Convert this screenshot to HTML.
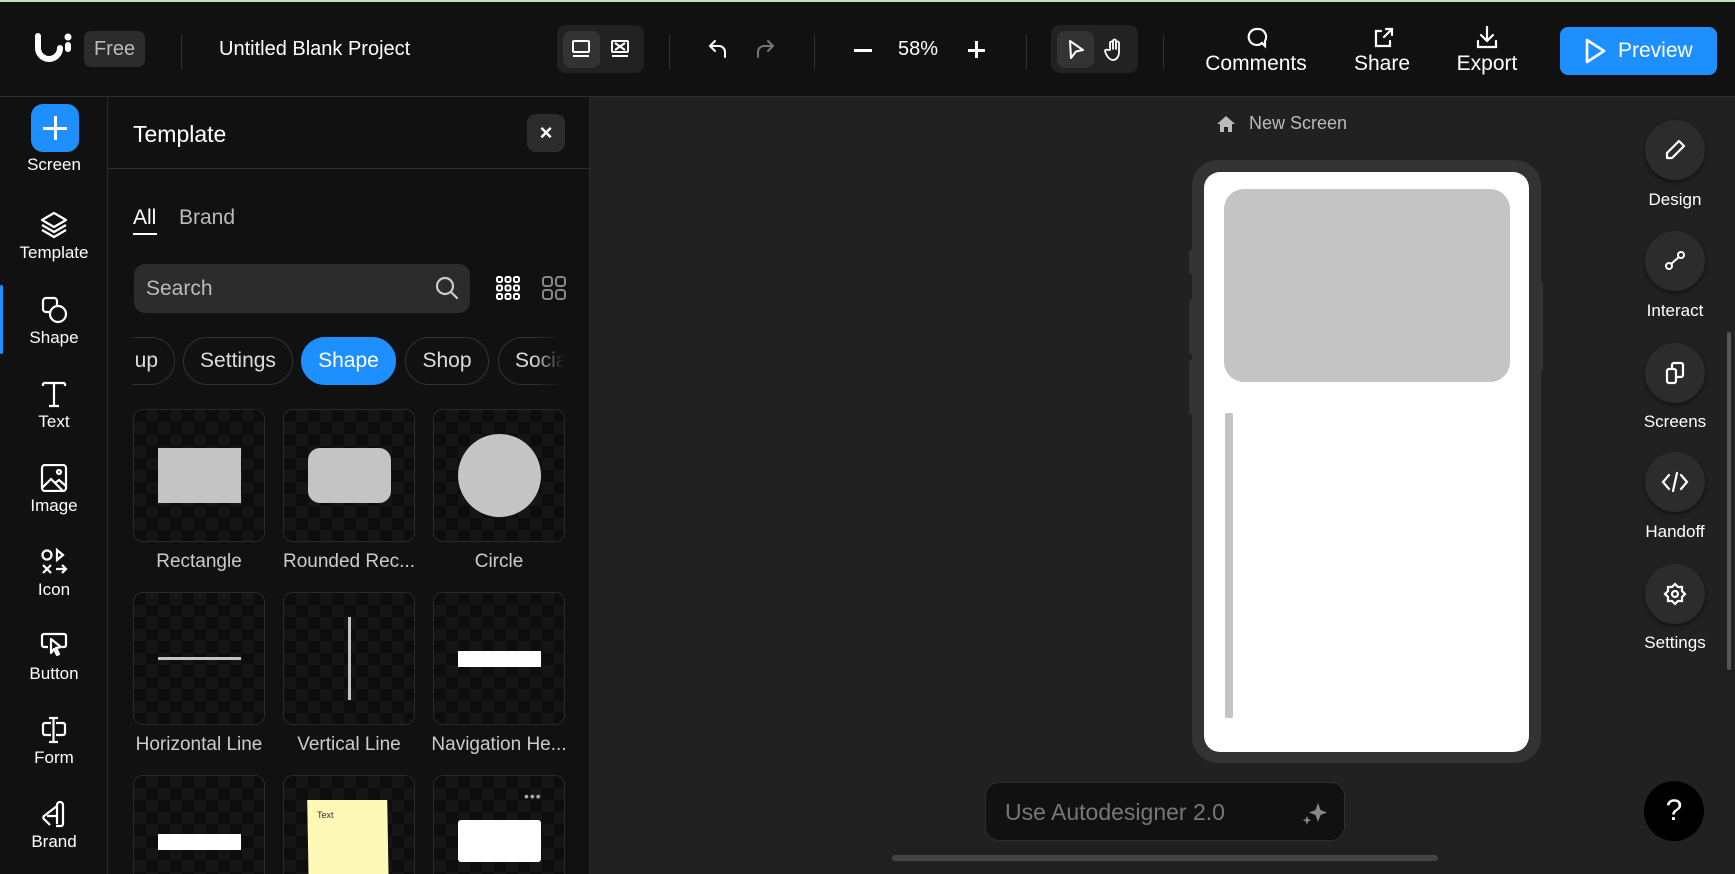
<!DOCTYPE html>
<html><head><meta charset="utf-8"><style>
*{box-sizing:border-box;margin:0;padding:0}
html{background:#111}
body{width:1735px;height:874px;overflow:hidden;background:#212121;font-family:"Liberation Sans",sans-serif;color:#fff;position:relative}
.abs{position:absolute}
.top{left:0;top:0;width:1735px;height:97px;background:#111;border-bottom:1px solid #2e2e2e;border-top:2px solid #bfe3c0}
.vd{position:absolute;top:33px;width:1px;height:34px;background:#333}
.rail{left:0;top:97px;width:108px;height:777px;background:#111;border-right:1px solid #2a2a2a}
.ri{position:absolute;left:0;width:108px;text-align:center;font-size:17px}
.ri svg{display:block;margin:0 auto 4px}
.panel{left:108px;top:97px;width:482px;height:777px;background:#111;border-right:1px solid #2a2a2a;overflow:hidden}
.chip{position:absolute;top:337px;height:48px;border:1px solid #333;border-radius:24px;font-size:21px;line-height:46px;text-align:center;color:#ddd}
.card{position:absolute;width:132px;height:133px;border:1px solid #2a2a2a;border-radius:10px;background-color:#0d0d0d;background-image:linear-gradient(45deg,#151515 25%,transparent 25%,transparent 75%,#151515 75%),linear-gradient(45deg,#151515 25%,transparent 25%,transparent 75%,#151515 75%);background-size:24px 24px;background-position:0 0,12px 12px;overflow:hidden}
.lbl{position:absolute;width:150px;text-align:center;font-size:19px;color:#ccc}
.rb{position:absolute;left:1645px;width:60px;height:60px;border-radius:50%;background:#2c2c2c;box-shadow:0 2px 4px rgba(0,0,0,.5);display:flex;align-items:center;justify-content:center}
.rl{position:absolute;left:1615px;width:120px;text-align:center;font-size:17px}
.tb{position:absolute;text-align:center;font-size:21px;width:120px}
</style></head><body>
<div class="abs top">
  <svg class="abs" style="left:34px;top:30px" width="40" height="34" viewBox="0 0 40 34"><path d="M4 4v12a11 11 0 0 0 22 0" fill="none" stroke="#fff" stroke-width="6" stroke-linecap="round"/><circle cx="34" cy="5" r="3.5" fill="#fff"/><path d="M34 13v4" stroke="#fff" stroke-width="6" stroke-linecap="round"/></svg>
  <div class="abs" style="left:84px;top:29px;width:61px;height:36px;background:#2c2c2c;border-radius:7px;font-size:20px;color:#bbb;line-height:36px;text-align:center">Free</div>
  <div class="vd" style="left:181px"></div>
  <div class="abs" style="left:219px;top:36px;font-size:20px">Untitled Blank Project</div>
  <div class="abs" style="left:557px;top:23px;width:87px;height:48px;background:#222;border-radius:9px"></div>
  <div class="abs" style="left:563px;top:29px;width:37px;height:37px;background:#333;border-radius:8px"></div>
  <svg class="abs" style="left:571px;top:37px" width="20" height="20" viewBox="0 0 20 20" fill="none" stroke="#fff" stroke-width="2"><rect x="2" y="2" width="16" height="11" rx="1"/><path d="M2 17h16"/></svg>
  <svg class="abs" style="left:610px;top:37px" width="20" height="20" viewBox="0 0 20 20" fill="none" stroke="#fff" stroke-width="2"><rect x="2" y="2" width="16" height="11" rx="1"/><path d="M5 4l10 7M15 4L5 11M2 17h16"/></svg>
  <div class="vd" style="left:669px"></div>
  <svg class="abs" style="left:707px;top:36px" width="22" height="22" viewBox="0 0 22 22" fill="none" stroke="#fff" stroke-width="2" stroke-linecap="round"><path d="M8 3L3 8l5 5M3 8h9a6 6 0 0 1 6 6v5"/></svg>
  <svg class="abs" style="left:754px;top:36px" width="22" height="22" viewBox="0 0 22 22" fill="none" stroke="#777" stroke-width="2" stroke-linecap="round"><path d="M14 3l5 5-5 5M19 8h-9a6 6 0 0 0-6 6v5"/></svg>
  <div class="vd" style="left:814px"></div>
  <div class="abs" style="left:854px;top:47px;width:18px;height:2.5px;background:#fff"></div>
  <div class="abs" style="left:898px;top:36px;font-size:20px">58%</div>
  <div class="abs" style="left:968px;top:47px;width:17px;height:2.5px;background:#fff"></div>
  <div class="abs" style="left:975px;top:39px;width:2.5px;height:17px;background:#fff"></div>
  <div class="vd" style="left:1026px"></div>
  <div class="abs" style="left:1051px;top:23px;width:87px;height:48px;background:#222;border-radius:9px"></div>
  <div class="abs" style="left:1057px;top:29px;width:37px;height:37px;background:#333;border-radius:8px"></div>
  <svg class="abs" style="left:1066px;top:37px" width="20" height="22" viewBox="0 0 20 22" fill="none" stroke="#fff" stroke-width="2" stroke-linejoin="round"><path d="M4 2l13 9-7 1.5L5 19z"/></svg>
  <svg class="abs" style="left:1104px;top:36px" width="20" height="24" viewBox="0 0 20 24" fill="none" stroke="#fff" stroke-width="1.8" stroke-linejoin="round"><path d="M6 12V5a1.5 1.5 0 0 1 3 0v6V3a1.5 1.5 0 0 1 3 0v8V5a1.5 1.5 0 0 1 3 0v9c0 5-3 8-6 8s-5-2-7-6l-1-3a1.5 1.5 0 0 1 2.5-1z"/></svg>
  <div class="vd" style="left:1163px"></div>
  <svg class="abs" style="left:1245px;top:24px" width="24" height="24" viewBox="0 0 24 24" fill="none" stroke="#fff" stroke-width="2.2"><path d="M12 3a8 8 0 1 0 5 14l3 3 0-5A8 8 0 0 0 12 3z"/></svg>
  <div class="tb" style="left:1196px;top:50px">Comments</div>
  <svg class="abs" style="left:1371px;top:24px" width="24" height="24" viewBox="0 0 24 24" fill="none" stroke="#fff" stroke-width="2.2" stroke-linecap="round"><path d="M10 5H5v15h14v-5M13 11l8-8M15 3h6v6"/></svg>
  <div class="tb" style="left:1322px;top:50px">Share</div>
  <svg class="abs" style="left:1475px;top:23px" width="24" height="26" viewBox="0 0 24 26" fill="none" stroke="#fff" stroke-width="2.2" stroke-linecap="round"><path d="M12 2v13M6 10l6 6 6-6M3 16v6h18v-6"/></svg>
  <div class="tb" style="left:1427px;top:50px">Export</div>
  <div class="abs" style="left:1560px;top:25px;width:157px;height:48px;background:#1e8fff;border-radius:8px"></div>
  <svg class="abs" style="left:1582px;top:35px" width="26" height="28" viewBox="0 0 26 28" fill="none" stroke="#fff" stroke-width="2.6" stroke-linejoin="round"><path d="M5 3l17 11L5 25z"/></svg>
  <div class="abs" style="left:1618px;top:37px;font-size:21px">Preview</div>
</div>

<div class="abs rail">
  <div class="abs" style="left:31px;top:7px;width:48px;height:48px;background:#1e8fff;border-radius:12px"></div>
  <div class="abs" style="left:43px;top:30px;width:24px;height:3px;background:#fff"></div>
  <div class="abs" style="left:53.5px;top:19px;width:3px;height:24px;background:#fff"></div>
  <div class="ri" style="top:58px">Screen</div>
  <div class="ri" style="top:114px"><svg width="30" height="28" viewBox="0 0 30 28" fill="none" stroke="#fff" stroke-width="2.2" stroke-linejoin="round"><path d="M15 2l12 7-12 7-12-7z M3 14l12 7 12-7 M3 19l12 7 12-7"/></svg>Template</div>
  <div class="abs" style="left:0;top:188px;width:3px;height:69px;background:#1e8fff;border-radius:2px"></div>
  <div class="ri" style="top:199px"><svg width="30" height="28" viewBox="0 0 30 28" fill="none" stroke="#fff" stroke-width="2.2"><rect x="4" y="2" width="14" height="14" rx="3"/><circle cx="19" cy="18" r="8" fill="#111"/></svg>Shape</div>
  <div class="ri" style="top:283px"><svg width="30" height="28" viewBox="0 0 30 28" fill="none" stroke="#fff" stroke-width="2.2"><path d="M4 3h22M4 3v3M26 3v3M15 3v23M10 26h10"/></svg>Text</div>
  <div class="ri" style="top:367px"><svg width="30" height="28" viewBox="0 0 30 28" fill="none" stroke="#fff" stroke-width="2.2"><rect x="3" y="1" width="24" height="26" rx="3"/><circle cx="20" cy="8" r="2"/><path d="M3 24l9-9 12 12M16 19l4-3 7 6"/></svg>Image</div>
  <div class="ri" style="top:451px"><svg width="30" height="28" viewBox="0 0 30 28" fill="none" stroke="#fff" stroke-width="2.2"><circle cx="8" cy="7" r="4.5"/><path d="M18 2v10l6-5z"/><path d="M4 17l8 8M12 17l-8 8M17 21h10M23 17l4 4-4 4"/></svg>Icon</div>
  <div class="ri" style="top:535px"><svg width="30" height="28" viewBox="0 0 30 28" fill="none" stroke="#fff" stroke-width="2.2" stroke-linejoin="round"><path d="M9 15H5a2 2 0 0 1-2-2V4a2 2 0 0 1 2-2h20a2 2 0 0 1 2 2v9a2 2 0 0 1-2 2h-2"/><path d="M12 7l10 8-5 1 3 6-2 1-3-6-3 4z"/></svg>Button</div>
  <div class="ri" style="top:619px"><svg width="30" height="28" viewBox="0 0 30 28" fill="none" stroke="#fff" stroke-width="2.2"><path d="M12 7H6a2 2 0 0 0-2 2v8a2 2 0 0 0 2 2h6M17 7h7a2 2 0 0 1 2 2v8a2 2 0 0 1-2 2h-7M14.5 2v24M10 2h9M10 26h9"/></svg>Form</div>
  <div class="ri" style="top:703px"><svg width="30" height="28" viewBox="0 0 30 28" fill="none" stroke="#fff" stroke-width="2.2" stroke-linejoin="round"><path d="M17 26h5a2 2 0 0 0 2-2V5a3 3 0 0 0-6 0v19M18 6L5 16a2 2 0 0 0 0 3l6 6M17 16l-9 0"/></svg>Brand</div>
</div>

<div class="abs panel">
  <div class="abs" style="left:25px;top:24px;font-size:23px">Template</div>
  <div class="abs" style="left:419px;top:17px;width:38px;height:38px;background:#2c2c2c;border-radius:9px;text-align:center;line-height:38px;font-size:22px;font-weight:bold">×</div>
  <div class="abs" style="left:0;top:71px;width:482px;height:1px;background:#2e2e2e"></div>
  <div class="abs" style="left:25px;top:109px;font-size:21px">All</div>
  <div class="abs" style="left:25px;top:136px;width:24px;height:2px;background:#fff"></div>
  <div class="abs" style="left:71px;top:109px;font-size:21px;color:#bbb">Brand</div>
  <div class="abs" style="left:26px;top:167px;width:336px;height:49px;background:#2c2c2c;border-radius:11px"></div>
  <div class="abs" style="left:38px;top:180px;font-size:21px;color:#bbb">Search</div>
  <svg class="abs" style="left:326px;top:178px" width="26" height="26" viewBox="0 0 26 26" fill="none" stroke="#ccc" stroke-width="2.2" stroke-linecap="round"><circle cx="11" cy="11" r="8"/><path d="M17 17l6 6"/></svg>
  <svg class="abs" style="left:387px;top:178px" width="26" height="26" viewBox="0 0 26 26" fill="none" stroke="#fff" stroke-width="2"><g><rect x="2" y="2" width="5" height="5" rx="1.5"/><rect x="10.5" y="2" width="5" height="5" rx="1.5"/><rect x="19" y="2" width="5" height="5" rx="1.5"/><rect x="2" y="10.5" width="5" height="5" rx="1.5"/><rect x="10.5" y="10.5" width="5" height="5" rx="1.5"/><rect x="19" y="10.5" width="5" height="5" rx="1.5"/><rect x="2" y="19" width="5" height="5" rx="1.5"/><rect x="10.5" y="19" width="5" height="5" rx="1.5"/><rect x="19" y="19" width="5" height="5" rx="1.5"/></g></svg>
  <svg class="abs" style="left:433px;top:178px" width="26" height="26" viewBox="0 0 26 26" fill="none" stroke="#888" stroke-width="2"><rect x="2" y="2" width="9" height="9" rx="2.5"/><rect x="15" y="2" width="9" height="9" rx="2.5"/><rect x="2" y="15" width="9" height="9" rx="2.5"/><rect x="15" y="15" width="9" height="9" rx="2.5"/></svg>
  <div class="abs" style="left:25px;top:240px;width:431px;height:50px;overflow:hidden">
    <div class="chip" style="top:0;left:-70px;width:112px;text-align:right;padding-right:16px">up</div>
    <div class="chip" style="top:0;left:50px;width:110px">Settings</div>
    <div class="chip" style="top:0;left:168px;width:95px;background:#1e8fff;border-color:#1e8fff;color:#fff">Shape</div>
    <div class="chip" style="top:0;left:272px;width:84px">Shop</div>
    <div class="chip" style="top:0;left:365px;width:100px;text-align:left;padding-left:16px">Social</div>
    <div class="abs" style="left:400px;top:0;width:31px;height:50px;background:linear-gradient(90deg,rgba(17,17,17,0),#111)"></div>
  </div>
  <div class="card" style="left:25px;top:312px"><div class="abs" style="left:24px;top:38px;width:83px;height:55px;background:#c4c4c4"></div></div>
  <div class="card" style="left:175px;top:312px"><div class="abs" style="left:24px;top:38px;width:83px;height:55px;background:#c4c4c4;border-radius:12px"></div></div>
  <div class="card" style="left:325px;top:312px"><div class="abs" style="left:24px;top:24px;width:83px;height:83px;background:#c4c4c4;border-radius:50%"></div></div>
  <div class="lbl" style="left:16px;top:454px">Rectangle</div>
  <div class="lbl" style="left:166px;top:454px">Rounded Rec...</div>
  <div class="lbl" style="left:316px;top:454px">Circle</div>
  <div class="card" style="left:25px;top:495px"><div class="abs" style="left:24px;top:64px;width:83px;height:3px;background:#c4c4c4"></div></div>
  <div class="card" style="left:175px;top:495px"><div class="abs" style="left:64px;top:24px;width:3px;height:83px;background:#c4c4c4"></div></div>
  <div class="card" style="left:325px;top:495px"><div class="abs" style="left:24px;top:58px;width:83px;height:16px;background:#fff"></div></div>
  <div class="lbl" style="left:16px;top:637px">Horizontal Line</div>
  <div class="lbl" style="left:166px;top:637px">Vertical Line</div>
  <div class="lbl" style="left:316px;top:637px">Navigation He...</div>
  <div class="card" style="left:25px;top:678px;height:110px"><div class="abs" style="left:24px;top:58px;width:83px;height:16px;background:#fff"></div></div>
  <div class="card" style="left:175px;top:678px;height:110px"><div class="abs" style="left:24px;top:24px;width:80px;height:90px;background:#fff9b8;transform:skewX(1deg)"></div><div class="abs" style="left:33px;top:34px;font-size:9px;color:#333">Text</div></div>
  <div class="card" style="left:325px;top:678px;height:110px"><div class="abs" style="left:90px;top:12px;font-size:14px;color:#aaa;letter-spacing:1px">•••</div><div class="abs" style="left:24px;top:44px;width:83px;height:42px;background:#fff;border-radius:3px"></div></div>
</div>

<svg class="abs" style="left:1216px;top:114px" width="20" height="20" viewBox="0 0 20 20" fill="#bbb"><path d="M10 2L1 10h3v8h4v-5h4v5h4v-8h3z"/></svg>
<div class="abs" style="left:1249px;top:113px;font-size:18px;color:#bbb">New Screen</div>
<div class="abs" style="left:1189px;top:250px;width:5px;height:24px;background:#333;border-radius:2px"></div>
<div class="abs" style="left:1189px;top:299px;width:5px;height:55px;background:#333;border-radius:2px"></div>
<div class="abs" style="left:1189px;top:360px;width:5px;height:55px;background:#333;border-radius:2px"></div>
<div class="abs" style="left:1538px;top:282px;width:5px;height:88px;background:#333;border-radius:2px"></div>
<div class="abs" style="left:1192px;top:160px;width:349px;height:603px;background:#333;border-radius:26px"></div>
<div class="abs" style="left:1204px;top:172px;width:325px;height:580px;background:#fff;border-radius:16px"></div>
<div class="abs" style="left:1224px;top:189px;width:286px;height:193px;background:#c4c4c4;border-radius:20px"></div>
<div class="abs" style="left:1225px;top:413px;width:8px;height:305px;background:#c4c4c4;border-radius:2px"></div>

<div class="rb" style="top:120px"><svg width="24" height="24" viewBox="0 0 24 24" fill="none" stroke="#fff" stroke-width="2.2" stroke-linejoin="round"><path d="M16 3l5 5L9 20H4v-5z"/></svg></div>
<div class="rl" style="top:190px">Design</div>
<div class="rb" style="top:231px"><svg width="24" height="24" viewBox="0 0 24 24" fill="none" stroke="#fff" stroke-width="2"><circle cx="6" cy="17" r="3"/><circle cx="18" cy="6" r="3"/><path d="M8 15l8-7"/></svg></div>
<div class="rl" style="top:301px">Interact</div>
<div class="rb" style="top:343px"><svg width="24" height="24" viewBox="0 0 24 24" fill="none" stroke="#fff" stroke-width="2.2" stroke-linejoin="round"><rect x="4" y="8" width="9" height="14" rx="2"/><path d="M9 8V4a2 2 0 0 1 2-2h7a2 2 0 0 1 2 2v10a2 2 0 0 1-2 2h-5"/></svg></div>
<div class="rl" style="top:412px">Screens</div>
<div class="rb" style="top:452px"><svg width="28" height="24" viewBox="0 0 28 24" fill="none" stroke="#fff" stroke-width="2.2" stroke-linecap="round"><path d="M8 5L2 12l6 7M20 5l6 7-6 7M16 3l-4 18"/></svg></div>
<div class="rl" style="top:522px">Handoff</div>
<div class="rb" style="top:564px"><svg width="24" height="24" viewBox="0 0 24 24" fill="none" stroke="#fff" stroke-width="2.2"><path d="M12 2l3 3h4v4l3 3-3 3v4h-4l-3 3-3-3H5v-4l-3-3 3-3V5h4z"/><circle cx="12" cy="12" r="3"/></svg></div>
<div class="rl" style="top:633px">Settings</div>
<div class="abs" style="left:1727px;top:332px;width:4px;height:338px;background:#555;border-radius:2px"></div>

<div class="abs" style="left:985px;top:782px;width:360px;height:59px;background:#111;border:1px solid #2e2e2e;border-radius:14px"></div>
<div class="abs" style="left:1005px;top:799px;font-size:23px;color:#777">Use Autodesigner 2.0</div>
<svg class="abs" style="left:1302px;top:800px" width="26" height="26" viewBox="0 0 26 26" fill="#888"><path d="M16 3l2.5 7 6.5 2.5-6.5 2.5L16 22l-2.5-7-6.5-2.5 6.5-2.5z"/><path d="M5 16l1.2 3 3 1.2-3 1.2L5 25l-1.2-3.6-3-1.2 3-1.2z"/></svg>
<div class="abs" style="left:1644px;top:781px;width:60px;height:60px;background:#000;border-radius:50%;text-align:center;line-height:60px;font-size:30px">?</div>
<div class="abs" style="left:892px;top:855px;width:546px;height:6px;background:#444;border-radius:3px"></div>
</body></html>
